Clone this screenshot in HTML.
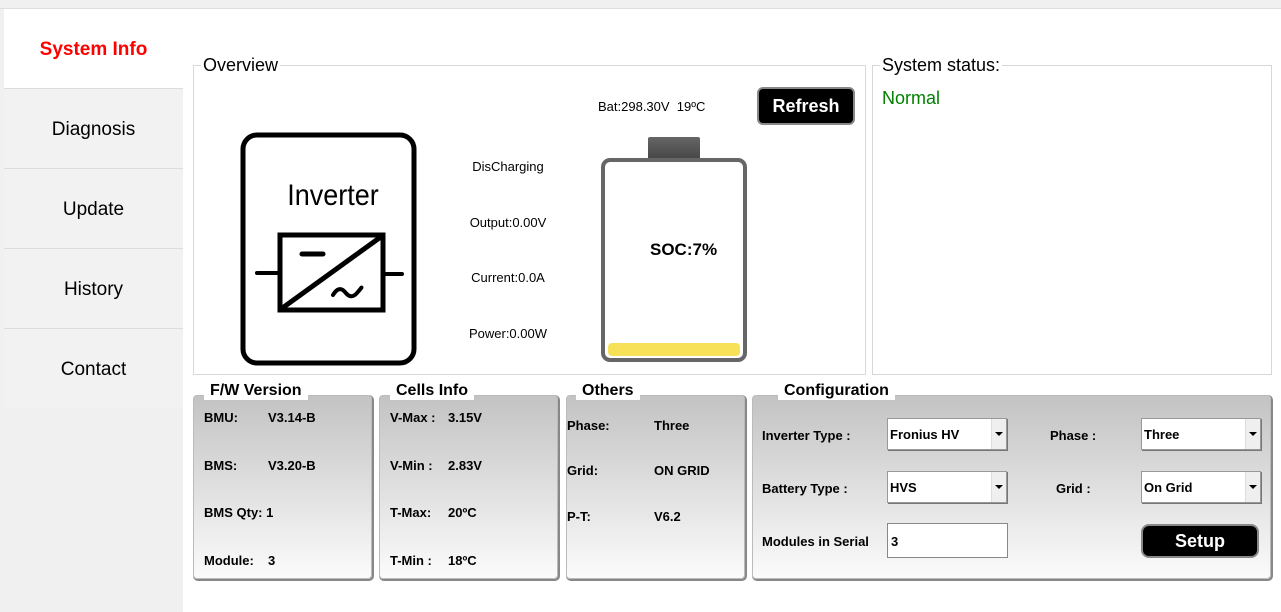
<!DOCTYPE html><html><head><style>
body{margin:0;width:1281px;height:612px;background:#fff;font-family:"Liberation Sans",Arial,sans-serif;position:relative;overflow:hidden}
.a{position:absolute}
.tab{position:absolute;left:4px;width:179px;height:79px;background:#f2f2f2;border-top:1px solid #dcdcdc;font-size:19px;text-align:center;line-height:81px;color:#000}
.box{position:absolute;border:1px solid #d8d8d8}
.lg{position:absolute;background:#fff;font-size:18px;padding:0 2px}
.pn{position:absolute;top:395px;height:184px;border-radius:4px;background:linear-gradient(#c3c3c3,#fbfbfb);box-shadow:1px 1px 0 1px #888;border:1px solid #bbb;box-sizing:border-box}
.pt{position:absolute;top:382px;background:#fff;font-size:16px;font-weight:bold;padding:0 6px;line-height:18px}
.t{position:absolute;font-size:13px;font-weight:bold}
.sel{position:absolute;width:120px;height:32px;background:#fff;border:1px solid #999;box-sizing:border-box;font-size:13px;font-weight:bold;line-height:32px;padding-left:2px;box-shadow:1px 1px 0 #777}
.sel:after{content:"";position:absolute;right:0;top:0;width:14px;height:30px;background:#efefef;border-left:1px solid #ddd}
.sel:before{content:"";position:absolute;right:3px;top:13px;border:4px solid transparent;border-top:4px solid #000;z-index:1}
.m{position:absolute;font-size:13px;text-align:center;width:120px}
</style></head><body>
<div class="a" style="left:0;top:0;width:1281px;height:8px;background:#f0f0f0;border-bottom:1px solid #ddd"></div>
<div class="a" style="left:0;top:9px;width:4px;height:603px;background:#f0f0f0"></div>
<div class="a" style="left:0;top:407px;width:183px;height:205px;background:#f0f0f0"></div>
<div class="a" style="left:4px;top:9px;width:179px;height:79px;color:#f00;font-weight:bold;font-size:19px;text-align:center;line-height:81px">System Info</div>
<div class="tab" style="top:88px">Diagnosis</div>
<div class="tab" style="top:168px">Update</div>
<div class="tab" style="top:248px">History</div>
<div class="tab" style="top:328px">Contact</div>

<div class="box" style="left:193px;top:65px;width:671px;height:308px"></div>
<div class="lg" style="left:201px;top:55px">Overview</div>
<div class="box" style="left:872px;top:65px;width:398px;height:308px"></div>
<div class="lg" style="left:880px;top:55px">System status:</div>
<div class="a" style="left:882px;top:88px;font-size:18px;color:#008000">Normal</div>

<svg class="a" style="left:230px;top:125px" width="190" height="250">
<rect x="13" y="10" width="171" height="228" rx="14" fill="none" stroke="#000" stroke-width="5"/>
<text x="103" y="80" font-size="30" text-anchor="middle" font-family="Liberation Sans Narrow,Liberation Sans" transform="scale(0.9,1)" transform-origin="103 80">Inverter</text>
<rect x="50" y="110" width="103" height="75" fill="none" stroke="#000" stroke-width="5"/>
<line x1="51" y1="184" x2="152" y2="111" stroke="#000" stroke-width="5"/>
<line x1="27" y1="148" x2="50" y2="148" stroke="#000" stroke-width="4" stroke-linecap="round"/>
<line x1="153" y1="149" x2="172" y2="149" stroke="#000" stroke-width="4" stroke-linecap="round"/>
<line x1="72" y1="129" x2="93" y2="129" stroke="#000" stroke-width="5" stroke-linecap="round"/>
<path d="M103 170 q6 -10 12 -3 q6 8 12 1 t4 -5" fill="none" stroke="#000" stroke-width="4" stroke-linecap="round"/>
</svg>

<div class="a" style="left:598px;top:99px;font-size:13px">Bat:298.30V&nbsp; 19ºC</div>
<div class="a" style="left:757px;top:87px;width:98px;height:38px;background:#000;border:2px solid #888;border-radius:6px;box-sizing:border-box;color:#fff;font-weight:bold;font-size:18px;text-align:center;line-height:34px">Refresh</div>
<div class="m" style="left:448px;top:159px">DisCharging</div>
<div class="m" style="left:448px;top:215px">Output:0.00V</div>
<div class="m" style="left:448px;top:270px">Current:0.0A</div>
<div class="m" style="left:448px;top:326px">Power:0.00W</div>
<div class="a" style="left:648px;top:137px;width:52px;height:24px;background:linear-gradient(#666,#444);border-radius:2px"></div>
<div class="a" style="left:601px;top:158px;width:146px;height:204px;border:4px solid #666;border-radius:9px;box-sizing:border-box;background:#fff"></div>
<div class="a" style="left:608px;top:343px;width:132px;height:13px;background:#f7e158;border-radius:4px"></div>
<div class="a" style="left:650px;top:240px;font-size:17px;font-weight:bold">SOC:7%</div>

<div class="pn" style="left:193px;width:179px"></div><div class="pt" style="left:204px">F/W Version</div>
<div class="pn" style="left:379px;width:179px"></div><div class="pt" style="left:390px">Cells Info</div>
<div class="pn" style="left:566px;width:179px"></div><div class="pt" style="left:576px">Others</div>
<div class="pn" style="left:752px;width:519px"></div><div class="pt" style="left:778px">Configuration</div>

<div class="t" style="left:204px;top:410px">BMU:</div><div class="t" style="left:268px;top:410px">V3.14-B</div>
<div class="t" style="left:204px;top:458px">BMS:</div><div class="t" style="left:268px;top:458px">V3.20-B</div>
<div class="t" style="left:204px;top:505px">BMS Qty:&nbsp;1</div>
<div class="t" style="left:204px;top:553px">Module:</div><div class="t" style="left:268px;top:553px">3</div>

<div class="t" style="left:390px;top:410px">V-Max :</div><div class="t" style="left:448px;top:410px">3.15V</div>
<div class="t" style="left:390px;top:458px">V-Min :</div><div class="t" style="left:448px;top:458px">2.83V</div>
<div class="t" style="left:390px;top:505px">T-Max:</div><div class="t" style="left:448px;top:505px">20ºC</div>
<div class="t" style="left:390px;top:553px">T-Min :</div><div class="t" style="left:448px;top:553px">18ºC</div>

<div class="t" style="left:567px;top:418px">Phase:</div><div class="t" style="left:654px;top:418px">Three</div>
<div class="t" style="left:567px;top:463px">Grid:</div><div class="t" style="left:654px;top:463px">ON GRID</div>
<div class="t" style="left:567px;top:509px">P-T:</div><div class="t" style="left:654px;top:509px">V6.2</div>

<div class="t" style="left:762px;top:428px">Inverter Type :</div>
<div class="sel" style="left:887px;top:418px">Fronius HV</div>
<div class="t" style="left:1050px;top:428px">Phase :</div>
<div class="sel" style="left:1141px;top:418px">Three</div>
<div class="t" style="left:762px;top:481px">Battery Type :</div>
<div class="sel" style="left:887px;top:471px">HVS</div>
<div class="t" style="left:1056px;top:481px">Grid :</div>
<div class="sel" style="left:1141px;top:471px">On Grid</div>
<div class="t" style="left:762px;top:534px">Modules in Serial</div>
<div class="a" style="left:887px;top:523px;width:121px;height:35px;border:1px solid #888;background:#fff;box-sizing:border-box;font-size:13px;font-weight:bold;line-height:35px;padding-left:3px">3</div>
<div class="a" style="left:1141px;top:524px;width:118px;height:34px;background:#000;border:2px solid #888;border-radius:8px;box-sizing:border-box;color:#fff;font-weight:bold;font-size:18px;text-align:center;line-height:31px">Setup</div>
</body></html>
